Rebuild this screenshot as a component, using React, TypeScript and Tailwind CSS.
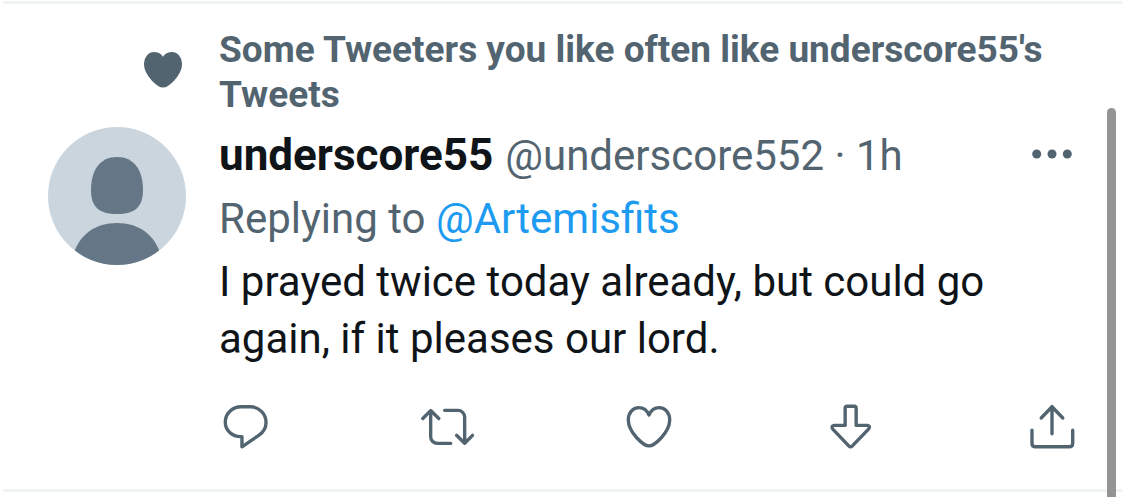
import type { ReactNode } from "react";

interface IconProps {
  className?: string;
  children: ReactNode;
}

function Icon({ className, children }: IconProps) {
  return (
    <svg
      viewBox="0 0 24 24"
      className={className}
      fill="none"
      stroke="currentColor"
      strokeWidth={1.5}
      strokeLinecap="round"
      strokeLinejoin="round"
      aria-hidden="true"
    >
      {children}
    </svg>
  );
}

const heartPath =
  "M12 20.4c-2.3 0-9.2-5.8-9.2-11.6 0-3.1 2-5.4 4.7-5.4 2 0 3.6 1.2 4.5 3.3.9-2.1 2.5-3.3 4.5-3.3 2.7 0 4.7 2.3 4.7 5.4 0 5.8-6.9 11.6-9.2 11.6z";

const actions = [
  {
    label: "Reply",
    icon: (
      <path d="M9.9 3h4c3.9 0 7 3.1 7 7 0 2.2-1.2 4.3-3.1 5.6L10.2 20.8v-4.5h-.5c-3.9 0-6.9-2.8-6.9-6.4C2.8 6 5.9 3 9.9 3z" />
    ),
  },
  {
    label: "Retweet",
    icon: (
      <>
        <path d="M.8 8.2l3.5-3.5L7.9 8.2M4.3 4.9v11.4a3 3 0 0 0 3 3h5.9" />
        <path d="M10.5 4.6h5.9a3 3 0 0 1 3 3v11.5M15.8 15.7l3.6 3.5 3.5-3.5" />
      </>
    ),
  },
  { label: "Like", icon: <path d={heartPath} /> },
  {
    label: "Downvote",
    icon: (
      <path d="M10.3 2.8h3.1q.9 0 .9.9v7.6h5q1.4.2.6 1.5l-7.3 7.6q-.8.7-1.6 0l-7.2-7.6q-.7-1.3.7-1.5h4.9V3.7q0-.9.9-.9z" />
    ),
  },
  {
    label: "Share",
    icon: <path d="M12 15V2.9M7.2 8L12 3l4.8 5M3.1 13.4v5.8q0 1.6 1.6 1.6h14.9q1.6 0 1.6-1.6v-5.8" />,
  },
];

function Avatar() {
  return (
    <svg viewBox="0 0 138 138" className="size-full rounded-full bg-[#cbd5de]" role="img" aria-label="underscore55">
      <path
        d="M69 30c17 0 26 13 26 33 0 17-8 24-26 24s-26-7-26-24c0-20 9-33 26-33z"
        fill="#657786"
      />
      <path d="M23 138c4-28 22-42 46-42s42 14 46 42z" fill="#657786" />
    </svg>
  );
}

function Tweet() {
  return (
    <article className="mx-[3px] border-y-3 border-[#eff3f4] pt-[23px] pr-[43px] pb-[35px] pl-[45px]">
      <div className="flex gap-[33px]">
        <div className="flex w-[138px] shrink-0 justify-end pt-5">
          <Icon className="size-[46px]">
            <path d={heartPath} fill="currentColor" />
          </Icon>
        </div>
        <p className="text-[37px] leading-[45px] font-bold">
          Some Tweeters you like often like underscore55's Tweets
        </p>
      </div>

      <div className="mt-2.5 flex gap-[33px]">
        <a href="#profile" className="block size-[138px] shrink-0">
          <Avatar />
        </a>
        <div className="min-w-0 flex-1 text-[42px] leading-[57px]">
          <div className="flex items-start justify-between">
            <div className="flex items-baseline gap-3 whitespace-nowrap">
              <a href="#profile" className="text-[44px] leading-[57px] font-bold text-[#0f1419]">underscore55</a>
              <span>@underscore552 · 1h</span>
            </div>
            <button type="button" aria-label="More">
              <svg viewBox="0 0 24 24" className="size-[54px]" fill="currentColor" aria-hidden="true">
                <circle cx="5.2" cy="12" r="2" />
                <circle cx="12" cy="12" r="2" />
                <circle cx="18.8" cy="12" r="2" />
              </svg>
            </button>
          </div>
          <p className="mt-1.5">
            Replying to <a href="#artemisfits" className="text-[#1d9bf0]">@Artemisfits</a>
          </p>
          <p className="mt-1.5 text-[#0f1419]">
            I prayed twice today already, but could go again, if it pleases our lord.
          </p>
          <div className="mt-[33px] flex justify-between">
            {actions.map(({ label, icon }) => (
              <button key={label} type="button" aria-label={label}>
                <Icon className="size-[54px]">{icon}</Icon>
              </button>
            ))}
          </div>
        </div>
      </div>
    </article>
  );
}

export default function App() {
  return (
    <main className="relative min-h-screen bg-white pt-px font-[Roboto,sans-serif] text-[#536471]">
      <Tweet />
      <div className="absolute top-[108px] right-[9px] bottom-0 w-[9px] rounded-t-full bg-[#949494]" />
    </main>
  );
}
